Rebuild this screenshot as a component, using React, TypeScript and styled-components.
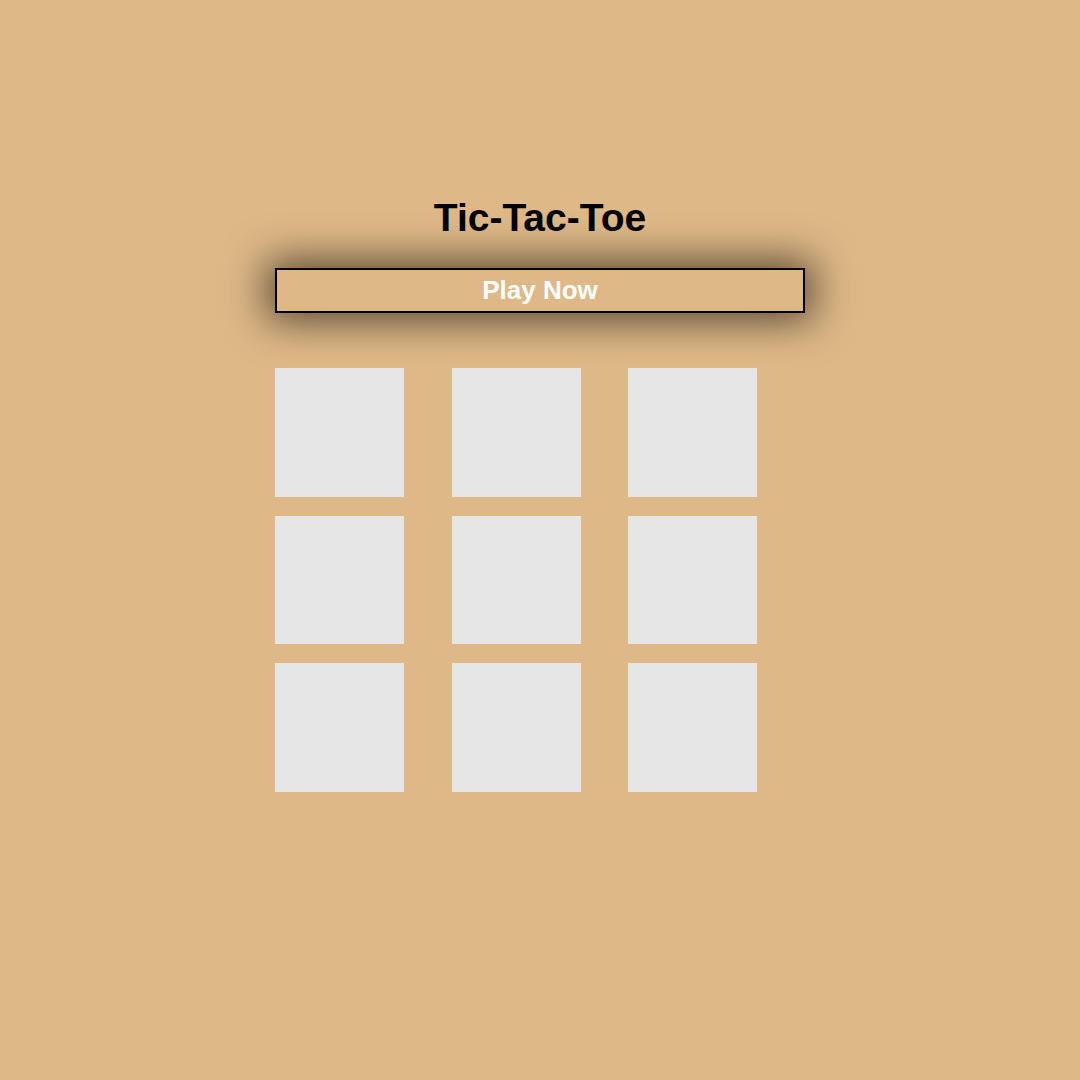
import React from "react";
import styled, { createGlobalStyle } from "styled-components";

const GlobalStyle = createGlobalStyle`
  html, body {
    margin: 0;
    padding: 0;
    background: #deb887;
    font-family: "Liberation Sans", Arial, sans-serif;
  }
`;

const Page = styled.main`
  min-height: 1080px;
  display: flex;
  flex-direction: column;
  align-items: center;
  padding-top: 194px;
  box-sizing: border-box;
`;

const Title = styled.h1`
  margin: 0;
  font-size: 39px;
  line-height: 48px;
  font-weight: 700;
  color: #000;
`;

const PlayButton = styled.button`
  margin-top: 26px;
  width: 530px;
  height: 45px;
  background: #deb887;
  border: 2px solid #000;
  box-shadow: 0 0 40px 8px rgba(0, 0, 0, 0.6);
  color: #fff;
  font-family: inherit;
  font-size: 26px;
  font-weight: 700;
  cursor: pointer;
  padding: 0;
`;

const Board = styled.div`
  margin-top: 55px;
  width: 530px;
  display: grid;
  grid-template-columns: repeat(3, 1fr);
  row-gap: 19px;
`;

const Cell = styled.div`
  width: 129px;
  height: 128.5px;
  background: #e6e6e6;
`;

export default function App() {
  return (
    <>
      <GlobalStyle />
      <Page>
        <Title>Tic-Tac-Toe</Title>
        <PlayButton>Play Now</PlayButton>
        <Board>
          {Array.from({ length: 9 }, (_, i) => (
            <Cell key={i} />
          ))}
        </Board>
      </Page>
    </>
  );
}
